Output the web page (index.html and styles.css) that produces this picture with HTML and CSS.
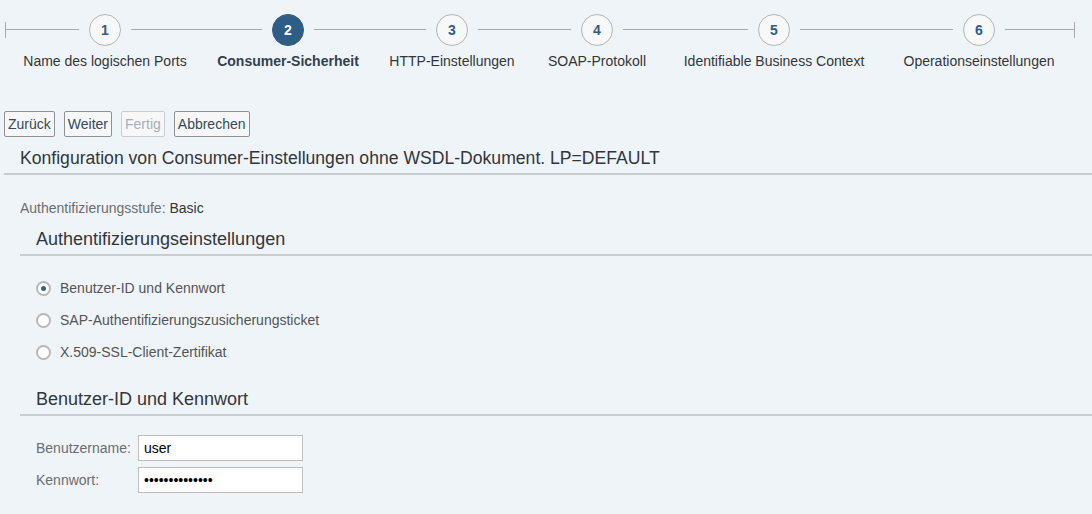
FILE: index.html
```
<!DOCTYPE html>
<html lang="de">
<head>
<meta charset="utf-8">
<title>Consumer-Sicherheit</title>
<link rel="stylesheet" href="styles.css">
</head>
<body>
<div class="stepper">
  <div class="steps">
    <div class="step s1"><span class="num">1</span><span class="label">Name des logischen Ports</span></div>
    <div class="step s2 active"><span class="num">2</span><span class="label">Consumer-Sicherheit</span></div>
    <div class="step s3"><span class="num">3</span><span class="label">HTTP-Einstellungen</span></div>
    <div class="step s4"><span class="num">4</span><span class="label">SOAP-Protokoll</span></div>
    <div class="step s5"><span class="num">5</span><span class="label">Identifiable Business Context</span></div>
    <div class="step s6"><span class="num">6</span><span class="label">Operationseinstellungen</span></div>
  </div>
</div>

<div class="toolbar">
  <button class="btn">Zurück</button>
  <button class="btn">Weiter</button>
  <button class="btn disabled">Fertig</button>
  <button class="btn">Abbrechen</button>
</div>

<div class="page-head">
  <h1 class="page-title">Konfiguration von Consumer-Einstellungen ohne WSDL-Dokument. LP=DEFAULT</h1>
</div>

<div class="level"><span class="level-key">Authentifizierungsstufe:</span> <span class="level-val">Basic</span></div>

<div class="section">
  <h2 class="section-title">Authentifizierungseinstellungen</h2>
</div>
<div class="radios">
  <div class="radio-row"><span class="radio checked"></span><span class="radio-label">Benutzer-ID und Kennwort</span></div>
  <div class="radio-row"><span class="radio"></span><span class="radio-label">SAP-Authentifizierungszusicherungsticket</span></div>
  <div class="radio-row"><span class="radio"></span><span class="radio-label">X.509-SSL-Client-Zertifikat</span></div>
</div>

<div class="section section2">
  <h2 class="section-title">Benutzer-ID und Kennwort</h2>
</div>
<div class="form">
  <div class="form-row"><label class="form-label">Benutzername:</label><input class="field" type="text" value="user"></div>
  <div class="form-row"><label class="form-label">Kennwort:</label><input class="field" type="password" value="xxxxxxxxxxxxxx"></div>
</div>
</body>
</html>
```

FILE: styles.css
```
html, body {
  margin: 0;
  padding: 0;
}
body {
  background: #eff4f9;
  font-family: "Liberation Sans", Arial, sans-serif;
  font-size: 14px;
  color: #32363a;
  width: 1092px;
  height: 514px;
  overflow: hidden;
}

/* Stepper */
.stepper {
  padding-top: 14px;
  height: 56px;
  background-image:
    linear-gradient(#a9a9a9, #a9a9a9),
    linear-gradient(#a9a9a9, #a9a9a9),
    linear-gradient(#a9a9a9, #a9a9a9);
  background-repeat: no-repeat;
  background-position: 5px 29px, 5px 22px, 1074px 22px;
  background-size: 1070px 1px, 1px 16px, 1px 16px;
}
.steps {
  display: grid;
  grid-template-columns: 188px 178px 150px 140px 214px 196px;
  padding-left: 11px;
}
.step {
  display: flex;
  flex-direction: column;
  align-items: center;
}
.num {
  box-sizing: border-box;
  width: 32px;
  height: 32px;
  border: 1px solid #b4b4b4;
  border-radius: 50%;
  background: #f6f8fa;
  box-shadow: 0 0 0 10px #eff4f9;
  color: #305d86;
  font-weight: bold;
  font-size: 14px;
  line-height: 30px;
  text-align: center;
}
.active .num {
  background: #305d86;
  border-color: #305d86;
  color: #ffffff;
}
.label {
  margin-top: 7px;
  line-height: 16px;
  white-space: nowrap;
  color: #32363a;
}
.active .label {
  font-weight: bold;
  color: #32404e;
}

/* Toolbar */
.toolbar {
  display: flex;
  gap: 8px;
  padding: 41px 0 0 4px;
}
.btn {
  box-sizing: border-box;
  height: 26px;
  padding: 0 3px;
  border: 1px solid #8e9195;
  border-radius: 2px;
  background: #f7f7f7;
  font-family: "Liberation Sans", Arial, sans-serif;
  font-size: 14px;
  color: #34495e;
  line-height: 24px;
}
.btn + .btn {
  margin-left: 1px;
}
.btn.disabled {
  border-color: #c9ced4;
  color: #a3b0bd;
}

/* Page heading */
.page-head {
  margin: 11px 0 0 4px;
  border-bottom: 2px solid #cccccc;
}
.page-title {
  margin: 0;
  padding: 0 0 4px 16px;
  font-size: 17.6px;
  font-weight: normal;
  line-height: 21px;
  color: #32363a;
}

.level {
  margin: 25px 0 0 20px;
  line-height: 16px;
}
.level-key {
  color: #6a6d70;
}
.level-val {
  color: #32363a;
}

/* Sections */
.section {
  margin: 13px 0 0 20px;
  border-bottom: 2px solid #cccccc;
}
.section2 {
  margin-top: 21px;
}
.section-title {
  margin: 0;
  padding: 0 0 4px 16px;
  font-size: 18px;
  font-weight: normal;
  line-height: 21px;
  color: #32363a;
}

/* Radios */
.radios {
  padding: 16px 0 0 36px;
}
.radio-row {
  display: flex;
  align-items: center;
  height: 32px;
}
.radio {
  box-sizing: border-box;
  width: 15px;
  height: 15px;
  border: 2px solid #b8b8b8;
  border-radius: 50%;
  background: #ffffff;
  margin-right: 9px;
  display: flex;
  align-items: center;
  justify-content: center;
}
.radio.checked::after {
  content: "";
  width: 5px;
  height: 5px;
  border-radius: 50%;
  background: #346187;
}
.radio-label {
  color: #545454;
  line-height: 16px;
}

/* Form */
.form {
  padding: 19px 0 0 36px;
  display: flex;
  flex-direction: column;
  gap: 6px;
}
.form-row {
  display: flex;
  align-items: center;
}
.form-label {
  width: 102px;
  color: #6a6d70;
  line-height: 16px;
}
.field {
  box-sizing: border-box;
  width: 165px;
  height: 26px;
  margin: 0;
  padding: 0 5px;
  border: 1px solid #bfbfbf;
  border-radius: 0;
  background: #ffffff;
  font-family: "Liberation Sans", Arial, sans-serif;
  font-size: 14px;
  color: #000000;
  outline: none;
}
```
